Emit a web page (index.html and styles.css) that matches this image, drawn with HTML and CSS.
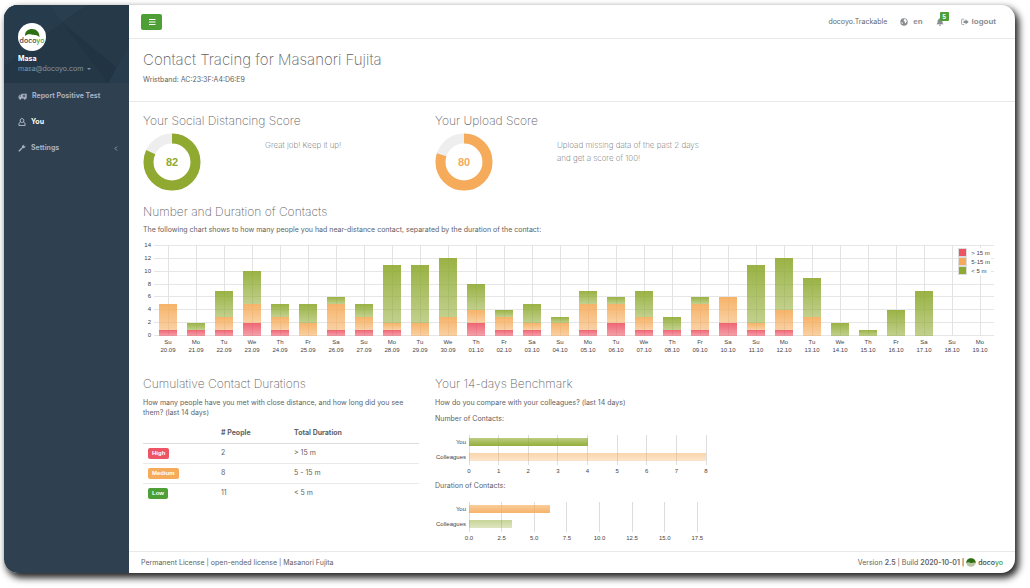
FILE: index.html
```html
<!DOCTYPE html>
<html lang="en">
<head>
<meta charset="utf-8">
<title>docoyo – Contact Tracing</title>
<link rel="stylesheet" href="styles.css">
</head>
<body>
<div class="shell">
  <nav class="sidebar" aria-label="Main">
    <div class="profile">
      <svg class="profile-bg" viewBox="0 0 125 77" preserveAspectRatio="none" aria-hidden="true">
        <path d="M0 0H45L58 17L0 60Z" fill="#263c4c"/>
        <path d="M45 0H84L58 17Z" fill="#293e4e"/>
        <path d="M58 17L125 72V77H104Z" fill="#223443"/>
        <path d="M58 17L84 0H125V72Z" fill="#253948"/>
        <path d="M104 77L125 40V77Z" fill="#273c4c"/>
      </svg>
      <div class="avatar">
        <svg viewBox="0 0 28 28" aria-hidden="true"><path d="M7 13C7 8 10 6 14 6C18.500 6 21.500 9 21.500 14C19 11.500 16 12.500 13.500 11.500C11 10.800 9 11 7 13Z" fill="#2e6f14"/></svg>
        <span class="brand">doco<span class="brand-end">yo</span></span>
      </div>
      <strong class="profile-name">Masa</strong>
      <button class="profile-menu" type="button">masa@docoyo.com <span class="caret"></span></button>
    </div>
    <ul class="menu">
      <li><a href="#report">
        <svg class="icon icon-wide" viewBox="0 0 16 12" aria-hidden="true"><path d="M6 1H15.500V9.500H1V5.500L3 3H6Z" fill="currentColor"/><path d="M2.300 6L3.600 4.300H5V6Z" fill="#2f4050"/><path d="M10.700 2.500V7.500M8.200 5H13.200" stroke="#2f4050" stroke-width="1.500"/><circle cx="4" cy="10" r="1.800" fill="currentColor"/><circle cx="12" cy="10" r="1.800" fill="currentColor"/></svg>
        Report Positive Test</a></li>
      <li><a class="active" href="#you" aria-current="page">
        <svg class="icon" viewBox="0 0 14 14" aria-hidden="true"><path d="M4.500 7C3 5 3.500 1 7 1S11 5 9.500 7M4.500 7C2.500 7.500 1.500 9 1.500 13H12.500C12.500 9 11.500 7.500 9.500 7C8 8 6 8 4.500 7Z" fill="none" stroke="#c3cad5" stroke-width="1.500"/></svg>
        You</a></li>
      <li><a href="#settings">
        <svg class="icon" viewBox="0 0 14 14" aria-hidden="true"><path d="M1 11.200L7 5.500C6.500 3 8.500 .7 11.500 1.200L9.700 3.200L10.900 4.500L13 3C13.300 6 11 7.800 8.600 7.200L3 13C1.500 13.500 .5 12.500 1 11.200Z" fill="currentColor"/></svg>
        Settings
        <svg class="chevron" viewBox="0 0 6 10" aria-hidden="true"><path d="M4.500 2L1.500 5L4.500 8" fill="none" stroke="currentColor" stroke-width="1.200"/></svg></a></li>
    </ul>
  </nav>

  <div class="page">
    <header class="topbar">
      <button class="toggle" type="button" aria-label="Toggle menu">
        <svg viewBox="0 0 8 8" aria-hidden="true"><path d="M1 1.500H7.500M1 4H7.500M1 6.500H7.500" stroke="#fff" stroke-width="1.200"/></svg>
      </button>
      <span class="tenant">docoyo.Trackable</span>
      <a class="top-link" href="#language">
        <svg class="icon" viewBox="0 0 14 14" aria-hidden="true"><circle cx="7" cy="7" r="6.500" fill="currentColor"/><path d="M7 2L9 1.800L11 3.500L12 6L10.500 7.500L9.500 9.500L8.300 8L8.500 6.500L6.500 5ZM2.300 7L4.500 8L5 10.500L3.500 10Z" fill="#fff"/></svg>
        en</a>
      <button class="bell" type="button" aria-label="Notifications">
        <svg class="icon" viewBox="0 0 14 14" aria-hidden="true"><path d="M7 0C7.700 0 8 .5 8 1.200C10.500 1.700 11.200 4 11.200 6C11.200 8.500 12 9.500 13.500 11H.5C2 9.500 2.800 8.500 2.800 6C2.800 4 3.500 1.700 6 1.200C6 .5 6.300 0 7 0ZM5 11.700H9C9 14.300 5 14.300 5 11.700Z" fill="currentColor"/></svg>
        <span class="count">5</span>
      </button>
      <a class="top-link logout" href="#logout">
        <svg class="icon" viewBox="0 0 14 14" aria-hidden="true"><path d="M5.500 2H2.500Q1 2 1 3.500V10Q1 11.500 2.500 11.500H5.500" fill="none" stroke="currentColor" stroke-width="1.300"/><path d="M4.500 5H8V2.200L13.500 6.800L8 11.400V8.600H4.500Z" fill="currentColor"/></svg>
        logout</a>
    </header>

    <div class="heading">
      <h1>Contact Tracing for Masanori Fujita</h1>
      <p>Wristband: AC:23:3F:A4:D6:E9</p>
    </div>

    <main class="content">
      <div class="row scores">
        <section>
          <h2>Your Social Distancing Score</h2>
          <div class="score">
            <div class="gauge gauge-green">
              <svg viewBox="0 0 58 58" aria-hidden="true"><circle class="track" cx="29" cy="29" r="23.500"/><circle class="value" cx="29" cy="29" r="23.500" pathLength="100" stroke-dasharray="82 100"/></svg>
              <span>82</span>
            </div>
            <p>Great job! Keep it up!</p>
          </div>
        </section>
        <section>
          <h2>Your Upload Score</h2>
          <div class="score">
            <div class="gauge gauge-orange">
              <svg viewBox="0 0 58 58" aria-hidden="true"><circle class="track" cx="29" cy="29" r="23.500"/><circle class="value" cx="29" cy="29" r="23.500" pathLength="100" stroke-dasharray="80 100"/></svg>
              <span>80</span>
            </div>
            <p>Upload missing data of the past 2 days and get a score of 100!</p>
          </div>
        </section>
      </div>

      <section class="contacts">
        <h2>Number and Duration of Contacts</h2>
        <p>The following chart shows to how many people you had near-distance contact, separated by the duration of the contact:</p>
        <div class="chart">
          <div class="y-axis"><span>14</span><span>12</span><span>10</span><span>8</span><span>6</span><span>4</span><span>2</span><span>0</span></div>
          <div class="plot">
            <div class="lines"><i></i><i></i><i></i><i></i><i></i><i></i><i></i><i></i></div>
            <div class="days" id="days"></div>
            <ul class="legend"><li class="long">&gt; 15 m</li><li class="mid">5-15 m</li><li class="short">&lt; 5 m</li></ul>
          </div>
        </div>
      </section>

      <div class="row details">
        <section>
          <h2>Cumulative Contact Durations</h2>
          <p>How many people have you met with close distance, and how long did you see them? (last 14 days)</p>
          <table>
            <thead><tr><th class="level"><span class="hidden">Level</span></th><th class="people"># People</th><th>Total Duration</th></tr></thead>
            <tbody>
              <tr><td><span class="label high">High</span></td><td>2</td><td>&gt; 15 m</td></tr>
              <tr><td><span class="label medium">Medium</span></td><td>8</td><td>5 - 15 m</td></tr>
              <tr><td><span class="label low">Low</span></td><td>11</td><td>&lt; 5 m</td></tr>
            </tbody>
          </table>
        </section>
        <section>
          <h2>Your 14-days Benchmark</h2>
          <p>How do you compare with your colleagues? (last 14 days)</p>
          <p class="measure">Number of Contacts:</p>
          <div class="bench">
            <div class="names"><span>You</span><span>Colleagues</span></div>
            <div class="bench-plot">
              <div class="ticks"><span>0</span><span>1</span><span>2</span><span>3</span><span>4</span><span>5</span><span>6</span><span>7</span><span>8</span></div>
              <div class="bars"><div class="bar green" style="width:50%"></div><div class="bar orange pale" style="width:100%"></div></div>
            </div>
          </div>
          <p class="measure">Duration of Contacts:</p>
          <div class="bench">
            <div class="names"><span>You</span><span>Colleagues</span></div>
            <div class="bench-plot">
              <div class="ticks" style="width:96.4%"><span>0.0</span><span>2.5</span><span>5.0</span><span>7.5</span><span>10.0</span><span>12.5</span><span>15.0</span><span>17.5</span></div>
              <div class="bars"><div class="bar orange" style="width:34.3%"></div><div class="bar green pale" style="width:18.3%"></div></div>
            </div>
          </div>
        </section>
      </div>
    </main>

    <footer class="footer">
      <span>Permanent License | open-ended license | Masanori Fujita</span>
      <span class="version">Version <b>2.5</b> | Build <b>2020-10-01 |</b>
        <svg class="mark" viewBox="0 0 20 18" aria-hidden="true"><ellipse cx="10" cy="9" rx="9.500" ry="8.500" fill="#b9c4a4"/><path d="M.5 10C.5 4 4.500 .5 10 .5S19.500 4 19.500 10C15 7 12 12 8 9.500C5 8 3 8.500 .5 10Z" fill="#2e6f14"/></svg>
        <span class="brand">doco<span class="brand-end">yo</span></span></span>
    </footer>
  </div>
</div>
<script src="chart.js"></script>
</body>
</html>
```

FILE: styles.css
```css
:root {
  --green: #90aa31;
  --orange: #f5ab59;
  --red: #ed5565;
  --action: #4f9f37;
  --line: #e9e9e9;
  --axis: "Liberation Sans", Arial, sans-serif;
}
* { box-sizing: border-box; }
body {
  margin: 0;
  padding: 5px 15px 15px 4px;
  background: #fff;
  color: #5f6264;
  font: 7px/10px Inter, "Liberation Sans", sans-serif;
}
h1, h2, p, ul { margin: 0; padding: 0; }
ul { list-style: none; }
h1, h2 { font-weight: 200; }
h1 { font-size: 15px; line-height: 20px; }
h2 { font-size: 12px; line-height: 16px; }
button { border: 0; padding: 0; background: none; color: inherit; font: inherit; }
a { color: inherit; text-decoration: none; }
.icon { width: 8px; height: 8px; flex: none; }
.icon-wide { width: 9px; height: 7px; }

.shell {
  display: flex;
  min-height: calc(100vh - 20px);
  border-radius: 14px;
  overflow: hidden;
  background: #fff;
  box-shadow: 3px 4px 7px 1px rgba(0, 0, 0, .85);
}

.sidebar { flex: 0 0 125px; background: #2f4050; color: #a7b1c2; }
.profile {
  position: relative;
  display: flex;
  flex-direction: column;
  align-items: flex-start;
  height: 78px;
  padding: 18px 14px 0;
  background: #243747;
}
.profile-bg { position: absolute; inset: 0; width: 100%; height: 100%; }
.profile > :not(.profile-bg) { position: relative; }
.avatar {
  display: grid;
  width: 28px;
  height: 28px;
  margin-bottom: 2px;
  border-radius: 50%;
  overflow: hidden;
  background: #fff;
}
.avatar > * { grid-area: 1 / 1; }
.avatar .brand { place-self: center; padding-top: 8px; }
.brand { color: #444; font-weight: 500; }
.brand-end { color: #4f9f37; }
.profile-name { color: #fff; line-height: 11px; }
.profile-menu { display: flex; align-items: center; gap: 4px; color: #8095a8; }
.caret { border: 2px solid transparent; border-top-color: currentColor; border-bottom: 0; }

.menu a { display: flex; align-items: center; gap: 5px; height: 26px; padding: 0 11px 0 14px; font-weight: 700; }
.menu .active { color: #fff; }
.chevron { width: 4px; height: 7px; margin-left: auto; }

.page { flex: 1; min-width: 0; display: flex; flex-direction: column; }
.topbar {
  display: flex;
  align-items: center;
  height: 34px;
  padding: 0 19px 0 12px;
  border-bottom: 1px solid var(--line);
  color: #8a8d90;
}
.toggle {
  display: grid;
  place-items: center;
  width: 21px;
  height: 16px;
  border-radius: 2px;
  background: var(--action);
}
.toggle svg { width: 8px; height: 8px; }
.tenant { margin: 0 13px 0 auto; color: #676a6c; }
.top-link { display: flex; align-items: center; gap: 5px; font: 700 8px/10px var(--axis); }
.bell { position: relative; display: flex; margin: 0 17px 0 13px; }
.count {
  position: absolute;
  left: 4px;
  top: -6px;
  width: 9px;
  border-radius: 1px;
  background: var(--action);
  color: #fff;
  font-size: 6px;
  font-weight: 700;
  line-height: 9px;
  text-align: center;
}
.logout { gap: 3px; }
.heading { padding: 11px 14px 16px; border-bottom: 1px solid var(--line); }
.heading p { margin-top: 5px; }

.content { flex: 1; padding: 11px 12px 0 14px; }
.row { display: grid; grid-template-columns: repeat(3, 1fr); column-gap: 16px; }
.score { display: grid; grid-template-columns: 122px 1fr; margin-top: 4px; }
.score p { padding-top: 6px; font-size: 8px; font-weight: 200; line-height: 13px; }
.gauge { display: grid; width: 58px; height: 58px; place-items: center; font: 700 11px/13px var(--axis); }
.gauge > * { grid-area: 1 / 1; }
.gauge circle { fill: none; stroke-width: 10; }
.gauge svg { transform: rotate(-90deg); }
.gauge .track { stroke: #eee; }
.gauge .value { stroke: currentColor; }
.gauge-green { color: var(--green); }
.gauge-orange { color: var(--orange); }

.contacts { margin-top: 13px; }
.contacts h2 + p { margin-top: 5px; }
.chart {
  display: grid;
  grid-template-columns: 8px 1fr;
  gap: 3px;
  margin: 10px 9px 0 0;
  color: #444;
  font: 6px/8px var(--axis);
}
.y-axis { display: flex; flex-direction: column; justify-content: space-between; height: 90px; text-align: right; }
.y-axis span { height: 0; line-height: 0; }
.plot { position: relative; display: grid; }
.plot > .lines, .plot > .days { grid-area: 1 / 1; }
.lines { display: flex; flex-direction: column; justify-content: space-between; height: 91px; }
.lines i { height: 1px; background: #e6e6e6; }
.days { display: grid; grid-auto-flow: column; grid-auto-columns: 1fr; text-align: center; }
.stack {
  display: flex;
  flex-direction: column-reverse;
  align-items: center;
  height: 91px;
  margin-bottom: 2px;
  background: linear-gradient(#e3e3e3, #e3e3e3) center / 1px 100% no-repeat;
}
.long { --c: 237, 85, 101; }
.mid { --c: 245, 171, 89; }
.short { --c: 143, 170, 48; }
.stack i { width: 61%; background: linear-gradient(rgba(var(--c), .9), rgba(var(--c), .55)); }
.day span { display: block; }
.legend { position: absolute; top: 3px; right: 3px; padding-right: 1px; background: #fff; }
.legend li { display: flex; align-items: center; gap: 4px; }
.legend li::before {
  content: "";
  width: 7px;
  height: 7px;
  border: 1px solid #ddd;
  background: rgb(var(--c));
}

.details { margin-top: 22px; }
.details h2 + p { margin-top: 6px; }
table { width: 100%; margin-top: 5px; border-collapse: collapse; table-layout: fixed; }
th, td { padding: 0 5px; text-align: left; line-height: 10px; }
th { height: 20px; border-bottom: 1px solid #ddd; font-weight: 700; }
td { height: 20px; }
tr + tr td { border-top: 1px solid var(--line); }
.level, .people { width: 73px; }
.hidden { visibility: hidden; }
.label {
  display: inline-block;
  padding: 0 4px;
  border-radius: 2px;
  color: #fff;
  font: 700 6px/11px var(--axis);
  vertical-align: middle;
}
.high { background: var(--red); }
.medium { background: var(--orange); }
.low { background: var(--action); }

.measure { margin-top: 6px; }
.bench {
  display: grid;
  grid-template-columns: 31px 1fr;
  gap: 3px;
  margin: 11px 5px 0 0;
  color: #444;
  font: 6px/10px var(--axis);
}
.names { display: flex; flex-direction: column; gap: 5px; padding-top: 2px; text-align: right; }
.bench-plot { display: grid; }
.bench-plot > * { grid-area: 1 / 1; }
.ticks { display: flex; justify-content: space-between; }
.ticks span {
  display: flex;
  flex-direction: column;
  align-items: center;
  width: 0;
  line-height: 8px;
}
.ticks span::before { content: ""; width: 1px; height: 30px; margin-bottom: 2px; background: #ddd; }
.bars { display: flex; flex-direction: column; gap: 7px; padding-top: 3px; }
.bar { height: 8px; }
.bar.green { background: linear-gradient(rgba(143, 170, 48, .6), rgba(143, 170, 48, .95)); }
.bar.orange { background: linear-gradient(rgba(245, 171, 89, .6), rgba(245, 171, 89, .9)); }
.bar.green.pale { background: linear-gradient(rgba(143, 170, 48, .5), rgba(143, 170, 48, .3)); }
.bar.orange.pale { background: linear-gradient(rgba(245, 171, 89, .5), rgba(245, 171, 89, .3)); }

.footer {
  display: flex;
  align-items: center;
  justify-content: space-between;
  height: 22px;
  padding: 0 12px;
  border-top: 1px solid var(--line);
}
.version { display: flex; align-items: center; gap: 2px; }
.version b { font-weight: 600; }
.mark { width: 10px; height: 9px; }
```

FILE: chart.js
```js
// Contacts per day: [weekday, date, > 15 m, 5-15 m, < 5 m]
const contacts = [
  ["Su", "20.09", 1, 4, 0], ["Mo", "21.09", 1, 0, 1], ["Tu", "22.09", 1, 2, 4],
  ["We", "23.09", 2, 3, 5], ["Th", "24.09", 1, 2, 2], ["Fr", "25.09", 0, 2, 3],
  ["Sa", "26.09", 1, 4, 1], ["Su", "27.09", 1, 2, 2], ["Mo", "28.09", 1, 1, 9],
  ["Tu", "29.09", 0, 2, 9], ["We", "30.09", 0, 3, 9], ["Th", "01.10", 2, 2, 4],
  ["Fr", "02.10", 1, 2, 1], ["Sa", "03.10", 1, 1, 3], ["Su", "04.10", 0, 2, 1],
  ["Mo", "05.10", 1, 4, 2], ["Tu", "06.10", 2, 3, 1], ["We", "07.10", 1, 2, 4],
  ["Th", "08.10", 1, 0, 2], ["Fr", "09.10", 1, 4, 1], ["Sa", "10.10", 2, 4, 0],
  ["Su", "11.10", 1, 1, 9], ["Mo", "12.10", 1, 3, 8], ["Tu", "13.10", 0, 3, 6],
  ["We", "14.10", 0, 0, 2], ["Th", "15.10", 0, 0, 1], ["Fr", "16.10", 0, 0, 4],
  ["Sa", "17.10", 0, 0, 7], ["Su", "18.10", 0, 0, 0], ["Mo", "19.10", 0, 0, 0]
];
const axisMax = 14;
const kinds = ["long", "mid", "short"];

document.getElementById("days").innerHTML = contacts.map(([weekday, date, ...values]) => {
  const parts = values
    .map((v, i) => v ? `<i class="${kinds[i]}" style="height:${v / axisMax * 100}%"></i>` : "")
    .join("");
  return `<div class="day"><div class="stack">${parts}</div><span>${weekday}</span><span>${date}</span></div>`;
}).join("");
```
